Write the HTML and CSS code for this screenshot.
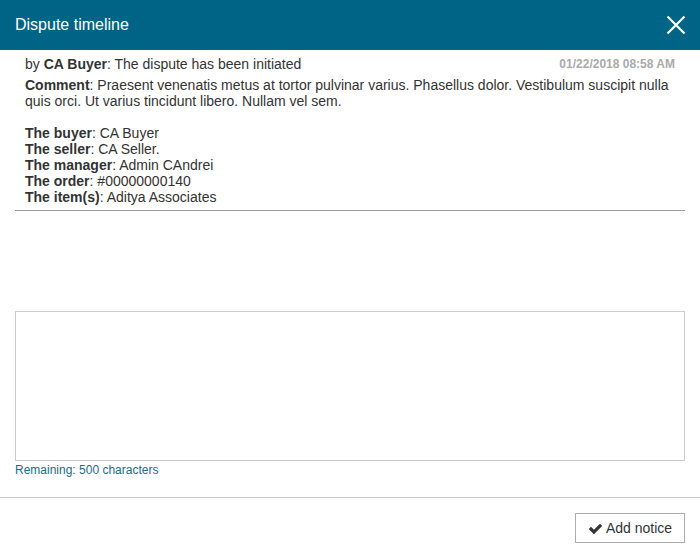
FILE: index.html
```html
<!DOCTYPE html>
<html>
<head>
<meta charset="utf-8">
<link rel="stylesheet" href="styles.css">
</head>
<body>
<div class="modal">
  <div class="header">
    <div class="title">Dispute timeline</div>
    <svg class="close" width="20" height="20" viewBox="0 0 20 20"><path d="M1.5 1.5 L18.5 18.5 M18.5 1.5 L1.5 18.5" stroke="#fff" stroke-width="2.2" fill="none"/></svg>
  </div>
  <div class="body">
    <div class="timeline">
      <div class="item">
        <div class="item-head">
          <div>by <b>CA Buyer</b>: The dispute has been initiated</div>
          <div class="date">01/22/2018 08:58 AM</div>
        </div>
        <div class="item-text">
          <b>Comment</b>: Praesent venenatis metus at tortor pulvinar varius. Phasellus dolor. Vestibulum suscipit nulla quis orci. Ut varius tincidunt libero. Nullam vel sem.<br><br>
          <b>The buyer</b>: CA Buyer<br>
          <b>The seller</b>: CA Seller.<br>
          <b>The manager</b>: Admin CAndrei<br>
          <b>The order</b>: #00000000140<br>
          <b>The item(s)</b>: Aditya Associates
        </div>
      </div>
    </div>
    <textarea class="notice"></textarea>
    <div class="remaining">Remaining: 500 characters</div>
  </div>
  <div class="footer">
    <button class="btn"><svg class="check" width="14" height="11" viewBox="0 300 1680 1150"><path fill="#333" d="M1671 566q0 40-28 68l-724 724-136 136q-28 28-68 28t-68-28l-136-136-362-362q-28-28-28-68t28-68l136-136q28-28 68-28t68 28l294 295 656-657q28-28 68-28t68 28l136 136q28 28 28 68z"/></svg>Add notice</button>
  </div>
</div>
</body>
</html>
```
FILE: styles.css
```css
html, body {
  margin: 0;
  padding: 0;
  background: #fff;
}
body {
  font-family: "Liberation Sans", Arial, sans-serif;
  font-size: 14px;
  color: #333;
}
.modal {
  width: 700px;
  height: 558px;
  display: flex;
  flex-direction: column;
}
.header {
  height: 50px;
  background: #006487;
  display: flex;
  align-items: center;
  justify-content: space-between;
  padding: 0 14px 0 15px;
  box-sizing: border-box;
}
.title {
  color: #fff;
  font-size: 16px;
}
.close {
  display: block;
}
.body {
  padding: 0 15px;
}
.timeline {
  height: 261px;
}
.item {
  padding: 6px 10px 5px 10px;
  border-bottom: 1px solid #999;
  line-height: 16px;
}
.item-head {
  display: flex;
  justify-content: space-between;
  align-items: center;
  margin-bottom: 5px;
}
.date {
  font-size: 12px;
  font-weight: bold;
  color: #aaa;
}
.notice {
  display: block;
  width: 100%;
  height: 150px;
  box-sizing: border-box;
  border: 1px solid #ccc;
  margin: 0;
  padding: 6px;
  resize: none;
  font-family: inherit;
}
.remaining {
  font-size: 12px;
  line-height: 16px;
  margin-top: 1px;
  color: #1d6a8a;
}
.footer {
  margin-top: 19px;
  border-top: 1px solid #ccc;
  padding: 15px 15px 0 15px;
  display: flex;
  justify-content: flex-end;
}
.btn {
  width: 110px;
  height: 30px;
  background: #fff;
  border: 1px solid #adadad;
  border-radius: 0;
  font-family: inherit;
  font-size: 14px;
  color: #333;
  display: flex;
  align-items: center;
  justify-content: center;
  gap: 4px;
  padding: 0;
}
.check {
  display: block;
}
```
